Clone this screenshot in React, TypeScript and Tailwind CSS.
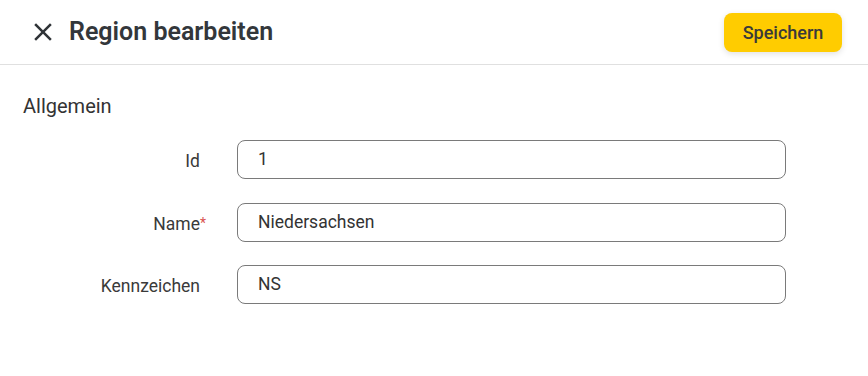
import React from "react";

function Field({ label, value, required }: { label: string; value: string; required?: boolean }) {
  return (
    <>
      <div className="text-right text-[17.5px] text-[#3a3a3a] pt-[4px]">
        <span className="relative">
          {label}
          {required && (
            <span className="absolute left-full top-[-1px] text-[14px] text-[#d9534f]">*</span>
          )}
        </span>
      </div>
      <div className="h-[39px] rounded-lg border border-[#7a7a7a] flex items-center pl-[20px] text-[17.5px] text-[#333]">
        {value}
      </div>
    </>
  );
}

export default function App() {
  return (
    <div className="w-[868px] h-[376px] bg-white font-['Roboto',sans-serif]">
      <header className="h-[65px] border-b border-[#e0e0e0] flex items-center pl-[28px] pr-[26px]">
        <svg width="30" height="30" viewBox="0 0 24 24" className="fill-[#2f3337]">
          <path d="M19 6.41L17.59 5 12 10.59 6.41 5 5 6.41 10.59 12 5 17.59 6.41 19 12 13.41 17.59 19 19 17.59 13.41 12z" />
        </svg>
        <h1 className="ml-[11px] text-[25px] font-semibold text-[#33373b]">Region bearbeiten</h1>
        <button className="ml-auto h-[39px] w-[118px] rounded-lg bg-[#ffcc00] text-[18px] font-medium text-[#3a3a3a] shadow-[0_2px_6px_rgba(0,0,0,0.12)]">
          Speichern
        </button>
      </header>
      <div className="pl-[23px] pr-[82px] pt-[27px]">
        <div className="text-[20px] leading-[28px] text-[#333]">Allgemein</div>
        <div className="mt-[20px] grid grid-cols-[177px_1fr] gap-x-[37px] gap-y-[23.5px] items-center">
          <Field label="Id" value="1" />
          <Field label="Name" value="Niedersachsen" required />
          <Field label="Kennzeichen" value="NS" />
        </div>
      </div>
    </div>
  );
}
